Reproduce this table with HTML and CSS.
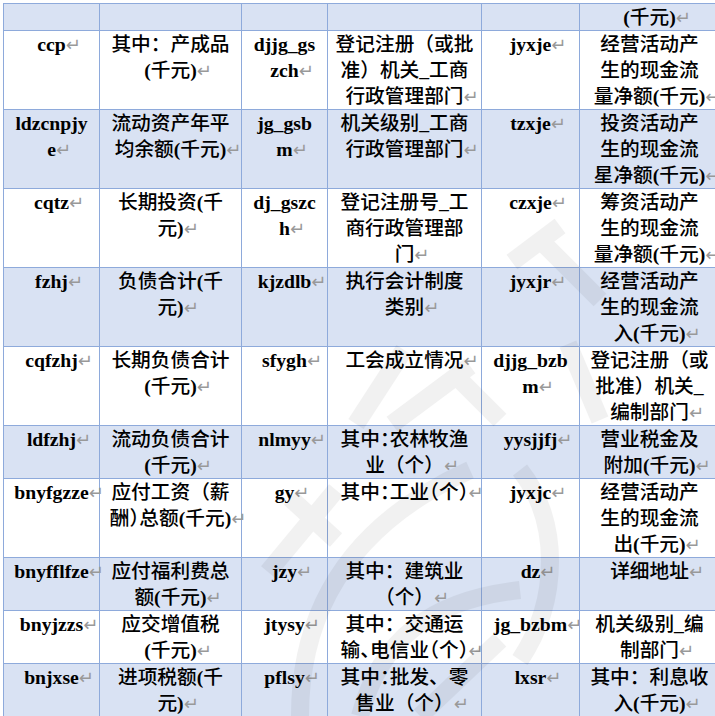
FILE: index.html
```html
<!DOCTYPE html>
<html lang="zh">
<head>
<meta charset="utf-8">
<title>字段表</title>
<link rel="stylesheet" href="styles.css">
</head>
<body>
<div class="wrap">
<table class="grid">
<colgroup>
<col class="c1"><col class="c2"><col class="c3"><col class="c4"><col class="c5"><col class="c6">
</colgroup>
<tbody>
<tr class="band">
<td class="k"></td><td></td><td class="k"></td><td></td><td class="k"></td><td><b>(</b>千元<b>)</b><span class="p">↵</span></td>
</tr>
<tr>
<td class="k">ccp<span class="p">↵</span></td>
<td>其中：产成品<br><b>(</b>千元<b>)</b><span class="p">↵</span></td>
<td class="k">djjg_gs<br>zch<span class="p">↵</span></td>
<td>登记注册（或批<br>准）机关<b>_</b>工商<br>行政管理部门<span class="p">↵</span></td>
<td class="k">jyxje<span class="p">↵</span></td>
<td>经营活动产<br>生的现金流<br>量净额<b>(</b>千元<b>)</b><span class="p">↵</span></td>
</tr>
<tr class="band">
<td class="k">ldzcnpjy<br>e<span class="p">↵</span></td>
<td>流动资产年平<br>均余额<b>(</b>千元<b>)</b><span class="p">↵</span></td>
<td class="k">jg_gsb<br>m<span class="p">↵</span></td>
<td>机关级别<b>_</b>工商<br>行政管理部门<span class="p">↵</span></td>
<td class="k">tzxje<span class="p">↵</span></td>
<td>投资活动产<br>生的现金流<br>星净额<b>(</b>千元<b>)</b><span class="p">↵</span></td>
</tr>
<tr>
<td class="k">cqtz<span class="p">↵</span></td>
<td>长期投资<b>(</b>千<br>元<b>)</b><span class="p">↵</span></td>
<td class="k">dj_gszc<br>h<span class="p">↵</span></td>
<td>登记注册号<b>_</b>工<br>商行政管理部<br>门<span class="p">↵</span></td>
<td class="k">czxje<span class="p">↵</span></td>
<td>筹资活动产<br>生的现金流<br>量净额<b>(</b>千元<b>)</b><span class="p">↵</span></td>
</tr>
<tr class="band">
<td class="k">fzhj<span class="p">↵</span></td>
<td>负债合计<b>(</b>千<br>元<b>)</b><span class="p">↵</span></td>
<td class="k">kjzdlb<span class="p">↵</span></td>
<td>执行会计制度<br>类别<span class="p">↵</span></td>
<td class="k">jyxjr<span class="p">↵</span></td>
<td>经营活动产<br>生的现金流<br>入<b>(</b>千元<b>)</b><span class="p">↵</span></td>
</tr>
<tr>
<td class="k">cqfzhj<span class="p">↵</span></td>
<td>长期负债合计<br><b>(</b>千元<b>)</b><span class="p">↵</span></td>
<td class="k">sfygh<span class="p">↵</span></td>
<td>工会成立情况<span class="p">↵</span></td>
<td class="k">djjg_bzb<br>m<span class="p">↵</span></td>
<td>登记注册（或<br>批准）机关<b>_</b><br>编制部门<span class="p">↵</span></td>
</tr>
<tr class="band">
<td class="k">ldfzhj<span class="p">↵</span></td>
<td>流动负债合计<br><b>(</b>千元<b>)</b><span class="p">↵</span></td>
<td class="k">nlmyy<span class="p">↵</span></td>
<td><span class="h">其中：</span>农林牧渔<br>业（个）<span class="p">↵</span></td>
<td class="k">yysjjfj<span class="p">↵</span></td>
<td>营业税金及<br>附加<b>(</b>千元<b>)</b><span class="p">↵</span></td>
</tr>
<tr>
<td class="k">bnyfgzze<span class="p">↵</span></td>
<td>应付工资（薪<br>酬<span class="h">）</span>总额<b>(</b>千元<b>)</b><span class="p">↵</span></td>
<td class="k">gy<span class="p">↵</span></td>
<td class="h">其中：工业（个）<span class="p">↵</span></td>
<td class="k">jyxjc<span class="p">↵</span></td>
<td>经营活动产<br>生的现金流<br>出<b>(</b>千元<b>)</b><span class="p">↵</span></td>
</tr>
<tr class="band">
<td class="k">bnyfflfze<span class="p">↵</span></td>
<td>应付福利费总<br>额<b>(</b>千元<b>)</b><span class="p">↵</span></td>
<td class="k">jzy<span class="p">↵</span></td>
<td>其中：建筑业<br>（个）<span class="p">↵</span></td>
<td class="k">dz<span class="p">↵</span></td>
<td>详细地址<span class="p">↵</span></td>
</tr>
<tr>
<td class="k">bnyjzzs<span class="p">↵</span></td>
<td>应交增值税<br><b>(</b>千元<b>)</b><span class="p">↵</span></td>
<td class="k">jtysy<span class="p">↵</span></td>
<td>其中：交通运<br><span class="h">输、电信业（个）</span><span class="p">↵</span></td>
<td class="k">jg_bzbm<span class="p">↵</span></td>
<td>机关级别<b>_</b>编<br>制部门<span class="p">↵</span></td>
</tr>
<tr class="band">
<td class="k">bnjxse<span class="p">↵</span></td>
<td>进项税额<b>(</b>千<br>元<b>)</b><span class="p">↵</span></td>
<td class="k">pflsy<span class="p">↵</span></td>
<td><span class="h">其中：</span>批发、零<br>售业（个）<span class="p">↵</span></td>
<td class="k">lxsr<span class="p">↵</span></td>
<td>其中：利息收<br>入<b>(</b>千元<b>)</b><span class="p">↵</span></td>
</tr>
</tbody>
</table>
<svg class="watermark" width="715" height="716" viewBox="0 0 715 716" aria-hidden="true">
<g fill="none" stroke="#000" stroke-width="18" stroke-linecap="butt">
<path d="M392 424 L470 366"/>
<path d="M452 372 L500 420"/>
<path d="M356 424 L404 350"/>
<path d="M568 344 L600 420"/>
<path d="M512 262 L560 226"/>
<path d="M540 240 L600 300"/>
<path d="M268 572 L336 490"/>
<path d="M290 498 L336 540"/>
<path d="M300 716 C300 600 360 520 470 470"/>
<path d="M360 716 C380 640 430 600 520 590"/>
<path d="M520 470 C560 520 560 600 520 660"/>
<path d="M420 716 L500 640"/>
</g>
</svg>
</div>
</body>
</html>
```
FILE: styles.css
```css
html, body {
  margin: 0;
  background: #ffffff;
}
body {
  padding: 3px 0 0 3px;
  overflow: hidden;
  width: 715px;
  height: 716px;
  box-sizing: border-box;
}
.wrap {
  position: relative;
}
.grid {
  border-collapse: collapse;
  table-layout: fixed;
  width: 716px;
  font-family: "Liberation Serif", "Noto Sans CJK SC", serif;
  font-size: 19.7px;
  line-height: 26px;
  color: #000;
}
.c1 { width: 96px; }
.c2 { width: 142px; }
.c3 { width: 86px; }
.c4 { width: 154px; }
.c5 { width: 98px; }
.c6 { width: 140px; }
.grid td {
  border: 1px solid #8eaadb;
  padding: 0 5px;
  text-align: center;
  vertical-align: top;
  white-space: nowrap;
  font-weight: 500;
  height: 26px;
}
.grid tr.band td {
  background: #d9e2f3;
}
.grid td.k {
  font-weight: bold;
}
.grid b {
  font-weight: bold;
}
.h {
  font-feature-settings: "halt";
}
.p {
  display: inline-block;
  width: 0;
  font-family: "DejaVu Sans", sans-serif;
  font-weight: normal;
  font-size: 18px;
  line-height: 0;
  color: #999999;
  vertical-align: baseline;
}
.watermark {
  position: absolute;
  left: -3px;
  top: -3px;
  pointer-events: none;
  opacity: 0.05;
}
```
